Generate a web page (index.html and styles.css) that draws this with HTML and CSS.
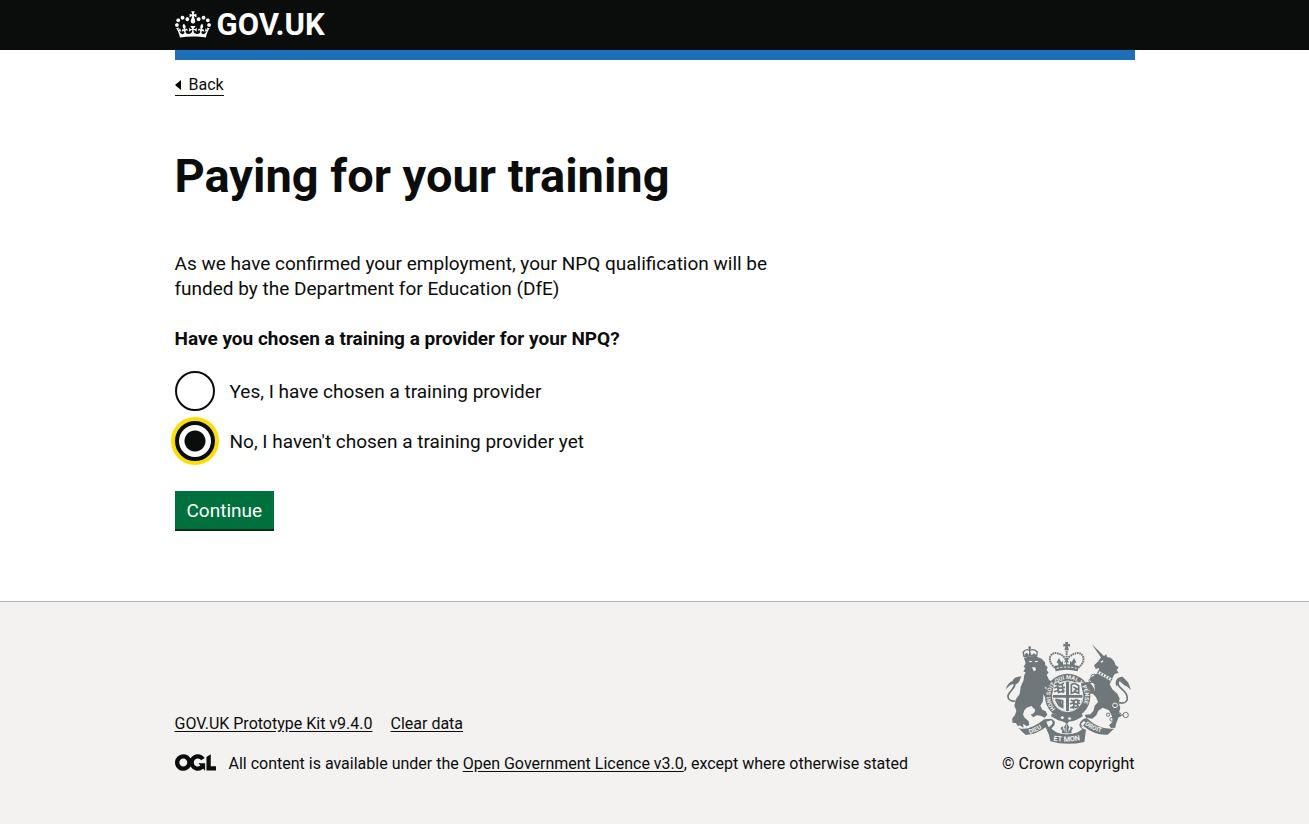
FILE: index.html
```html
<!DOCTYPE html>
<html lang="en">
<head>
<meta charset="utf-8">
<meta name="viewport" content="width=device-width, initial-scale=1">
<title>Paying for your training</title>
<link rel="stylesheet" href="styles.css">
</head>
<body>
<header class="header">
  <div class="container">
    <a class="header-link" href="#">
      <svg class="crown" viewBox="0 0 132 97" width="36" height="27" aria-hidden="true"><path fill="currentColor" fill-rule="evenodd" d="M25 30.2c3.5 1.5 7.7-.2 9.1-3.7 1.5-3.6-.2-7.8-3.9-9.2-3.6-1.4-7.6.3-9.1 3.9-1.4 3.5.3 7.5 3.9 9zM9 39.5c3.6 1.5 7.8-.2 9.2-3.7 1.5-3.6-.2-7.8-3.9-9.1-3.6-1.5-7.6.2-9.1 3.8-1.4 3.5.3 7.5 3.8 9zM4.4 57.2c3.5 1.5 7.7-.2 9.1-3.8 1.5-3.6-.2-7.7-3.9-9.1-3.5-1.5-7.6.3-9.1 3.8-1.4 3.5.3 7.6 3.9 9.1zm38.3-21.4c3.5 1.5 7.7-.2 9.1-3.8 1.5-3.6-.2-7.7-3.9-9.1-3.6-1.5-7.6.3-9.1 3.8-1.3 3.6.4 7.7 3.9 9.1zm64.4-5.6c-3.6 1.5-7.8-.2-9.1-3.7-1.5-3.6.2-7.8 3.8-9.2 3.6-1.4 7.7.3 9.2 3.9 1.3 3.5-.4 7.5-3.9 9zm15.9 9.3c-3.6 1.5-7.7-.2-9.1-3.7-1.5-3.6.2-7.8 3.7-9.1 3.6-1.5 7.7.2 9.2 3.8 1.5 3.5-.3 7.5-3.8 9zm4.7 17.7c-3.6 1.5-7.8-.2-9.2-3.8-1.5-3.6.2-7.7 3.9-9.1 3.6-1.5 7.7.3 9.2 3.8 1.3 3.5-.4 7.6-3.9 9.1zM89.3 35.8c-3.6 1.5-7.8-.2-9.2-3.8-1.4-3.6.2-7.7 3.9-9.1 3.6-1.5 7.7.3 9.2 3.8 1.4 3.6-.3 7.7-3.9 9.1zM69.7 17.7l8.9 4.7V9.3l-8.9 2.8c-.2-.3-.5-.6-.9-.9L72.4 0H59.6l3.5 11.2c-.3.3-.6.5-.9.9l-8.8-2.8v13.1l8.8-4.7c.3.3.6.7.9.9l-5 15.4v.1c-.2.8-.4 1.6-.4 2.4 0 4.1 3.1 7.5 7 8.1h.2c.3 0 .7.1 1 .1.4 0 .7 0 1-.1h.2c4-.6 7.1-4.1 7.1-8.1 0-.8-.1-1.7-.4-2.4V34l-5.1-15.4c.4-.2.7-.6 1-.9zM66 92.8c16.9 0 32.8 1.1 47.1 3.2 4-16.9 8.9-26.7 14-33.5l-9.6-3.4c1 4.9 1.1 7.2 0 10.2-1.5-1.4-3-4.3-4.2-8.7L108.6 76c2.8-2 5-3.2 7.5-3.3-4.4 9.4-10 11.9-13.6 11.2-4.3-.8-6.3-4.6-5.6-7.9 1-4.7 5.7-5.9 8-.5 4.3-8.7-3-11.4-7.6-8.8 7.1-7.2 7.9-13.5 2.1-21.1-8 6.1-8.1 12.3-4.5 20.8-4.7-5.4-12.1-2.5-9.5 6.2 3.4-5.2 7.9-2 7.2 3.1-.6 4.3-6.4 7.8-13.5 7.2-10.3-.9-10.9-8-11.2-13.8 2.5-.5 7.1 1.8 11 7.3L80.2 60c-4.1 4.4-8 5.3-12.3 5.4 1.4-4.4 8-11.6 8-11.6H55.5s6.4 7.2 7.9 11.6c-4.2-.1-8-1-12.3-5.4l1.4 16.4c3.9-5.5 8.5-7.7 10.9-7.3-.3 5.8-.9 12.8-11.1 13.8-7.2.6-12.9-2.9-13.5-7.2-.7-5 3.8-8.3 7.1-3.1 2.7-8.7-4.6-11.6-9.4-6.2 3.7-8.5 3.6-14.7-4.6-20.8-5.8 7.6-5 13.9 2.2 21.1-4.7-2.6-11.9.1-7.7 8.8 2.3-5.5 7.1-4.2 8.1.5.7 3.3-1.3 7.1-5.7 7.9-3.5.7-9-1.8-13.5-11.2 2.5.1 4.7 1.3 7.5 3.3l-4.7-15.4c-1.2 4.4-2.7 7.2-4.3 8.7-1.1-3-.9-5.3 0-10.2l-9.5 3.4c5 6.9 9.9 16.7 14 33.5 14.8-2.1 30.8-3.2 47.7-3.2z"/></svg>
      <span>GOV.UK</span>
    </a>
  </div>
</header>
<div class="container">
  <div class="brand-bar"></div>
  <a class="back" href="#"><svg width="6" height="10" viewBox="0 0 6 10" aria-hidden="true"><path d="M0 5 6 0v10z"/></svg>Back</a>
  <main class="main">
    <h1 class="title">Paying for your training</h1>
    <p class="intro">As we have confirmed your employment, your NPQ qualification will be funded by the Department for Education (DfE)</p>
    <form>
      <fieldset class="question">
        <legend class="legend">Have you chosen a training a provider for your NPQ?</legend>
        <div class="option">
          <input class="radio" type="radio" name="provider" id="provider-yes" value="yes">
          <label for="provider-yes">Yes, I have chosen a training provider</label>
        </div>
        <div class="option">
          <input class="radio" type="radio" name="provider" id="provider-no" value="no" checked>
          <label for="provider-no">No, I haven't chosen a training provider yet</label>
        </div>
      </fieldset>
      <button class="button" type="button">Continue</button>
    </form>
  </main>
</div>
<footer class="footer">
  <div class="container footer-row">
    <div class="footer-meta">
      <nav class="footer-links">
        <a href="#">GOV.UK Prototype Kit v9.4.0</a>
        <a href="#">Clear data</a>
      </nav>
      <div class="licence">
        <svg viewBox="0 0 483.2 195.7" width="41" height="17" aria-hidden="true"><path fill="currentColor" d="M421.5 142.8V.1l-50.7 32.3v161.1h112.4v-50.7zm-122.3-9.6A47.12 47.12 0 0 1 221 97.8c0-26 21.1-47.1 47.1-47.1 16.7 0 31.4 8.7 39.7 21.8l42.7-27.2A97.63 97.63 0 0 0 268.1 0c-36.5 0-68.3 20.1-85.1 49.7A98 98 0 0 0 97.8 0C43.9 0 0 43.9 0 97.8s43.9 97.8 97.8 97.8c36.5 0 68.3-20.1 85.1-49.7a97.76 97.76 0 0 0 149.6 25.4l19.4 22.2h3v-87.8h-80l24.3 27.5zM97.8 145c-26 0-47.1-21.1-47.1-47.1s21.1-47.1 47.1-47.1 47.1 21.1 47.1 47.1S123.8 145 97.8 145"/></svg>
        <span>All content is available under the <a href="#">Open Government Licence v3.0</a>, except where otherwise stated</span>
      </div>
    </div>
    <a class="copyright" href="#">
      <svg class="crest" viewBox="36 21 375 306" width="125" height="102" aria-hidden="true">
        <!-- lion -->
        <path class="line" d="M64 198C44 200 37 187 46 174S67 153 61 142" stroke-width="5"/>
        <path d="M36 164C38 148 47 142 56 137 60 128 70 125 83 124 77 131 79 140 69 146 62 151 56 144 49 150 43 155 40 158 36 164z"/>
        <path d="M90 70 102 65 130 66 143 71 153 82 154 91 161 96 158 105 164 113 158 119 165 134 176 143 179 154 168 151 170 163 160 160 151 154 157 165 169 176 164 187 153 186 148 178 147 199 139 212 145 224 155 229 160 239 152 248 140 242 128 241 118 247 110 239 120 234 124 225 112 213 98 218 91 226 87 239 92 248 104 259 106 270 98 274 88 266 88 278 77 271 72 274 65 264 55 263 55 250 63 240 67 227 61 212 66 192 77 177 80 155 89 135 90 123 95 111 88 110 94 99 89 96 95 84z"/>
        <path class="hole" d="M103 79 112 77 115 80 109 82zM122 79 130 77 132 81 123 82zM114 97 124 97 126 105 119 109z"/>
        <path class="line" d="M90 66 87 50M128 65 130 49M90 66Q108 59 128 65M88 51Q96 40 107 46 119 40 129 50M107 38V60" stroke-width="4"/>
        <path d="m92 57 7-4 5 7 4-8 5 8 7-5 6 4 2 8-21-3-17 2z"/>
        <circle cx="107" cy="38" r="4"/>
        <!-- unicorn -->
        <path d="M293 27 332 65 324 72z"/>
        <path d="M327 65 337 58 339 66 350 68 360 78 365 91 374 97 368 105 374 113 362 117 357 126 352 137 347 148 355 163 370 176 377 191 374 204 379 218 375 233 382 243 374 247 366 266 364 278 351 279 345 271 356 260 354 244 345 226 326 218 313 227 307 241 295 251 276 248 272 239 289 238 298 228 302 212 312 201 306 187 295 174 285 179 289 170 280 154 272 151 274 142 286 141 293 149 300 160 303 170 301 148 289 139 288 129 302 121 311 113 316 99 305 102 300 91 310 82 319 70z"/>
        <path class="hole" d="m319 80 8-4 1 4-6 3z"/>
        <path class="hole-line" d="M311 111Q334 123 357 137" stroke-width="9"/>
        <path class="line" d="M311 111Q334 123 357 137" stroke-width="7" stroke-dasharray="4 5"/>
        <path class="line" d="M374 203C398 209 404 193 397 178S374 159 372 147 379 132 386 143" stroke-width="5"/>
        <path d="M367 153C360 137 372 124 386 125 391 132 399 136 403 143L411 165 400 155 391 151 382 143 376 134 374 151z"/>
        <g class="line" stroke-width="3"><circle cx="298" cy="125" r="7"/><circle cx="291" cy="137" r="6"/><circle cx="342" cy="239" r="5"/><circle cx="354" cy="253" r="6"/><circle cx="375" cy="239" r="6"/><circle cx="395" cy="240" r="8"/><path d="m381 240 7 0M287 168Q301 184 292 169M301 117l9 5"/></g>
        <circle class="hole-line" cx="363" cy="211" r="7" stroke-width="3"/>
        <!-- royal crown -->
        <path d="m213 21 10 0-2 7 7-2v9l-7-2 4 13h-14l4-13-7 2v-9l7 2z"/>
        <g class="line"><path d="M183 98C156 78 168 49 190 55 203 58 213 66 217 78M253 98C280 78 268 49 246 55 233 58 222 66 218 78" stroke-width="6" stroke-dasharray="5 2"/><path d="M218 48v29" stroke-width="6" stroke-dasharray="5 2"/></g>
        <path d="m188 82 7-13 7 13 5-5v18h9V81l-6 3 8-15 8 15-6-3v14h8V77l5 5 7-13 7 13-5 3v12H193V86z"/>
        <path d="M181 93Q218 82 255 93L251 109Q218 100 185 109z"/>
        <path class="hole-line" d="M188 100Q218 92 248 100" stroke-width="3" stroke-dasharray="7 4"/>
        <!-- garter and shield -->
        <circle cx="221" cy="184" r="68"/>
        <circle class="hole-line" cx="221" cy="184" r="46" stroke-width="3"/>
        <path id="garter" class="none" d="M185 222A52 52 0 1 1 257 222"/>
        <text class="motto" font-size="17"><textPath href="#garter">HONI SOIT QUI MAL Y PENSE</textPath></text>
        <path class="hole" d="M181 142h35v38h-39v-15zM225 142h35q5 20 5 38h-40zM177 188h39v41q-34-7-39-41zM225 188h40q-4 33-40 41z"/>
        <g class="line" stroke-width="5"><path d="m182 149 8-4 7 5 13-5M181 159l10-4 6 5 16-3M180 170l12-4 5 5 15-4M189 144l5 31M204 145l4 29M232 175v-26l10-4 12 7v23l-11-4zM238 156l12 6-10 7M184 193l22 4v20l-11-5-10-18M192 194l10 23M198 194l5 23M230 195l9 4 7-5 12 4M228 207l11-4 7 5 12-4M229 219l10-5 7 4 9-5M241 194l-3 28M252 194l-2 24"/></g>
        <!-- ribbon -->
        <path d="M174 235Q217 263 262 235L267 243Q242 261 226 259L220 266 208 260Q190 257 171 244z"/>
        <path class="hole" d="m199 247 7-4 5 6-7 4zM221 249l7-3 5 6-8 3z"/>
        <path d="M73 279Q105 290 151 253L171 251Q187 256 181 271L172 281 186 291Q217 305 252 291L265 283 258 276Q252 264 267 253L278 249Q317 286 360 281L341 299Q304 302 267 272L263 279 276 284 271 321Q217 333 169 319L165 300 155 277Q124 301 94 299z"/>
        <path class="hole" d="m157 260 15-4q7 6 1 13l-9 8-4-9zM262 265l8-7 5 4-12 15z"/>
        <path class="hole" d="M186 291 196 258 218 268 243 258 252 291Q218 304 186 291z"/>
        <path d="m218 263 8 14-4 9 7-4 1-8 7 5-5 9 1 7h-30l2-7-6-9 8-5 1 8 7 4-5-9z"/>
        <path class="hole-line" d="m218 269-2 13 2 11m-11-13 7 11m15-11-7 11" stroke-width="2"/>
        <path id="left-motto" class="none" d="M107 297Q134 289 160 267"/>
        <path id="mid-motto" class="none" d="M178 317Q218 324 270 314"/>
        <path id="right-motto" class="none" d="M272 269Q303 292 345 296"/>
        <g class="motto" font-size="19"><text><textPath href="#left-motto">DIEU</textPath></text><text font-size="22"><textPath href="#mid-motto">ET MON</textPath></text><text><textPath href="#right-motto">DROIT</textPath></text></g>
      </svg>
      <span>© Crown copyright</span>
    </a>
  </div>
</footer>
</body>
</html>
```
FILE: styles.css
```css
* { box-sizing: border-box; }
body {
  margin: 0;
  min-height: 100vh;
  display: flex;
  flex-direction: column;
  color: #0b0c0c;
  background: #fff;
  font-family: Roboto, "Noto Sans", Arial, sans-serif;
  font-size: 19px;
  line-height: 25px;
}
a { color: inherit; }
.container { width: 100%; max-width: 960px; margin: 0 auto; }
.header { background: #0b0c0c; color: #fff; }
.header-link {
  display: inline-flex;
  align-items: center;
  gap: 6px;
  height: 48px;
  margin-bottom: 2px;
  vertical-align: top;
  text-decoration: none;
  font-size: 31px;
  font-weight: 700;
}
.brand-bar { height: 10px; background: #1d70b8; }
.back {
  display: inline-flex;
  align-items: center;
  gap: 8px;
  margin-top: 15px;
  border-bottom: 1px solid #0b0c0c;
  font-size: 16px;
  line-height: 20px;
  text-decoration: none;
}
.main { padding: 55px 0 70px; }
.title { margin: 0 0 50px; font-size: 47px; line-height: 50px; font-weight: 700; }
.intro { max-width: 610px; margin: 0 0 25px; }
.question { margin: 0; padding: 0; border: 0; }
.legend { padding: 0; margin-bottom: 20px; font-weight: 700; }
.option { display: flex; align-items: center; gap: 15px; margin-bottom: 10px; }
.radio {
  appearance: none;
  flex: none;
  width: 40px;
  height: 40px;
  margin: 0;
  border: 2px solid #0b0c0c;
  border-radius: 50%;
  background: #fff;
}
.radio:checked {
  border-width: 4px;
  box-shadow: 0 0 0 4px #fd0;
  background: radial-gradient(circle, #0b0c0c 0 10px, #fff 11px);
}
.button {
  display: block;
  margin-top: 20px;
  padding: 7px 12px 8px;
  border: 0;
  background: #00703c;
  box-shadow: inset 0 -2px #002d18;
  color: #fff;
  font: inherit;
}
.footer {
  flex: 1;
  padding: 40px 0;
  border-top: 1px solid #b1b4b6;
  background: #f3f2f1;
  font-size: 16px;
  line-height: 20px;
}
.footer-row { display: flex; justify-content: space-between; align-items: flex-end; }
.footer-links { display: flex; gap: 18px; margin-bottom: 20px; }
.footer a { text-underline-offset: 2px; }
.licence { display: flex; gap: 13px; }
.copyright { display: flex; flex-direction: column; align-items: center; gap: 10px; }
.footer .copyright { text-decoration: none; }
.crest { fill: #6f777b; }
.crest .line { fill: none; stroke: #6f777b; }
.crest .hole { fill: #f3f2f1; }
.crest .hole-line { fill: none; stroke: #f3f2f1; }
.crest .none { fill: none; }
.crest .motto { fill: #f3f2f1; font-weight: 700; }
```
